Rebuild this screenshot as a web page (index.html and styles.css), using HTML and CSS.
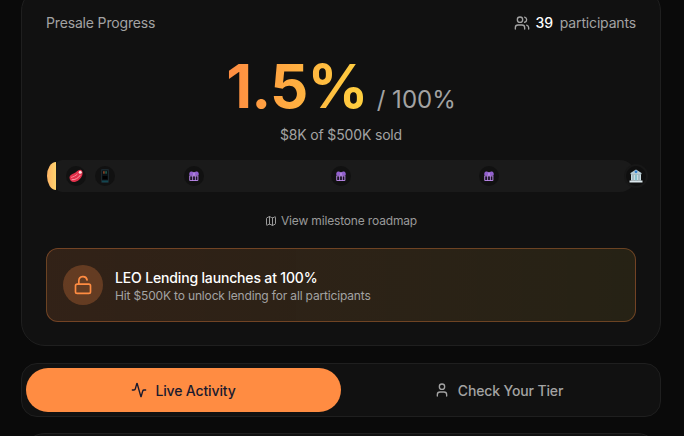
FILE: index.html
```html
<!DOCTYPE html>
<html lang="en">
<head>
<meta charset="utf-8">
<title>Presale Progress</title>
<link rel="stylesheet" href="styles.css">
</head>
<body>
<main class="page">
  <section class="card">
    <header class="head">
      <span>Presale Progress</span>
      <span class="count">
        <svg class="ic16" viewBox="0 0 24 24"><path d="M16 21v-2a4 4 0 0 0-4-4H6a4 4 0 0 0-4 4v2"/><circle cx="9" cy="7" r="4"/><path d="M22 21v-2a4 4 0 0 0-3-3.87"/><path d="M16 3.13a4 4 0 0 1 0 7.75"/></svg>
        <b>39</b> <span>participants</span>
      </span>
    </header>
    <div class="figure"><span class="big">1.5%</span><span class="of">/ 100%</span></div>
    <p class="sold">$8K of $500K sold</p>
    <div class="track">
      <div class="fill"></div>
      <div class="bar"></div>
      <span class="pin" style="left:5%"><svg viewBox="0 0 14 14" class="emo meat"><path d="M.5 8.500C.6 6 3.500 5 5.500 4 7.500 3 9 .8 11.200.7 13.300.6 13.900 3 13.500 5.200 13 8.300 10 11.800 6.500 12.800 3.200 13.700.4 11.700.5 8.500z" fill="#e0304a"/><path d="M3 10.800c3 .2 6.500-1.600 8.300-4.600" stroke="#ff9aa8" stroke-width="1" fill="none"/><path d="M2.500 8.300C4.500 7.700 6.500 6.900 8.200 5.200" stroke="#ff7d8e" stroke-width="1" fill="none"/><circle cx="11.200" cy="3.300" r="1.500" fill="#ffdfe2"/></svg></span>
      <span class="pin" style="left:10%"><svg viewBox="0 0 8 14" class="emo phone"><rect width="8" height="14" rx="1.200" fill="#1b272d"/><rect x="1" y="1.500" width="6" height="10" fill="#0b1115"/><rect x="2" y="2.200" width="1.800" height="2.500" fill="#7a3f24"/><rect x="4.200" y="2.200" width="1.800" height="2.500" fill="#1f5446"/><rect x="1.600" y="7" width="4.800" height="3.200" fill="#000"/><rect x="1" y="11.500" width="6" height="1.700" fill="#134650"/></svg></span>
      <span class="pin" style="left:25%"><svg viewBox="0 0 10 10" class="emo gift"><use href="#gift"/></svg></span>
      <span class="pin" style="left:50%"><svg viewBox="0 0 10 10" class="emo gift"><use href="#gift"/></svg></span>
      <span class="pin" style="left:75%"><svg viewBox="0 0 10 10" class="emo gift"><use href="#gift"/></svg></span>
      <span class="pin pin-end" style="left:100%"><svg viewBox="0 0 14 14" class="emo bank"><path d="M7 .5 12.500 4v1.200h-11V4z" fill="#b6cbd4"/><circle cx="7" cy="2.800" r="1.400" fill="#2f7fd0"/><rect x="2" y="5.200" width="10" height="6.300" fill="#c9dbe2"/><rect x="3.400" y="5.800" width="1.200" height="5.700" fill="#8ea6b1"/><rect x="6.400" y="5.800" width="1.200" height="5.700" fill="#5fb0bd"/><rect x="9.400" y="5.800" width="1.200" height="5.700" fill="#8ea6b1"/><rect x=".5" y="11.500" width="13" height="2" fill="#dbe7ec"/></svg></span>
    </div>
    <a class="roadmap">
      <svg class="ic12" viewBox="0 0 24 24"><path d="M14.106 5.553a2 2 0 0 0 1.788 0l3.659-1.830A1 1 0 0 1 21 4.619v12.764a1 1 0 0 1-.553.894l-4.553 2.277a2 2 0 0 1-1.788 0l-4.212-2.106a2 2 0 0 0-1.788 0l-3.659 1.830A1 1 0 0 1 3 19.381V6.618a1 1 0 0 1 .553-.894l4.553-2.277a2 2 0 0 1 1.788 0z"/><path d="M15 5.764v15"/><path d="M9 3.236v15"/></svg>
      View milestone roadmap
    </a>
    <div class="unlock">
      <span class="unlock-ic"><svg class="ic20" viewBox="0 0 24 24"><rect x="3" y="11" width="18" height="11" rx="2"/><path d="M7 11V7a5 5 0 0 1 9.900-1"/></svg></span>
      <div class="unlock-text">
        <strong>LEO Lending launches at 100%</strong>
        <small>Hit $500K to unlock lending for all participants</small>
      </div>
    </div>
  </section>
  <nav class="tabs">
    <button class="tab on"><svg class="ic16" viewBox="0 0 24 24"><path d="M22 12h-2.480a2 2 0 0 0-1.930 1.460l-2.350 8.360a.25.25 0 0 1-.48 0L9.240 2.180a.25.25 0 0 0-.48 0l-2.350 8.360A2 2 0 0 1 4.490 12H2"/></svg><span class="tab-label">Live Activity</span></button>
    <button class="tab"><svg class="ic16" viewBox="0 0 24 24"><path d="M19 21v-2a4 4 0 0 0-4-4H9a4 4 0 0 0-4 4v2"/><circle cx="12" cy="7" r="4"/></svg><span class="tab-label">Check Your Tier</span></button>
  </nav>
  <section class="next"></section>
</main>
<svg class="defs" aria-hidden="true"><defs><g id="gift"><path d="M.3 2.200C.6.800 2 .2 3 .5L5 1.600 7 .5c1-.3 2.400.3 2.700 1.700v2.300H.3z" fill="#9360cf"/><rect x="1.100" y="4.900" width="7.800" height="4.600" fill="#1c1426" stroke="#c08cf0" stroke-width=".9"/><path d="M5 1.600v2.900" stroke="#c9a2f2" stroke-width="1"/><path d="M3.600 4.900v4.600M6.400 4.900v4.600" stroke="#c08cf0" stroke-width=".8"/></g></defs></svg>
</body>
</html>
```
FILE: styles.css
```css
* { box-sizing: border-box; }
html, body { margin: 0; height: 100%; overflow: hidden; }
body {
  background: #0a0a0a;
  font-family: Inter, "Liberation Sans", sans-serif;
  letter-spacing: -0.01em;
  color: #a3a3a3;
}
svg { fill: none; stroke: currentColor; stroke-width: 2; stroke-linecap: round; stroke-linejoin: round; flex: none; }
.defs { width: 0; height: 0; display: block; }
.ic12 { width: 12px; height: 12px; }
.ic16 { width: 16px; height: 16px; }
.ic20 { width: 20px; height: 20px; }
.page { margin-top: -13px; padding: 0 23px 0 21px; display: flex; flex-direction: column; }
.card {
  background: #111111;
  border: 1px solid #1f1f1f;
  border-radius: 24px;
  padding: 24px;
  height: 359px;
}
.head { display: flex; justify-content: space-between; align-items: center; height: 22px; font-size: 14px; line-height: 20px; }
.count { display: flex; align-items: center; gap: 7px; }
.count svg { margin-right: -1px; }
.count b { color: #fff; font-weight: 500; }
.figure { display: flex; justify-content: center; align-items: baseline; gap: 9px; margin-top: 22px; height: 62px; line-height: 60px; }
.big {
  font-size: 60px; font-weight: 700; line-height: 60px; letter-spacing: -0.014em;
  background: linear-gradient(90deg, #ff8c42, #ffd23f);
  -webkit-background-clip: text; background-clip: text; color: transparent;
}
.of { font-size: 24px; line-height: 32px; color: #a3a3a3; letter-spacing: 0; }
.sold { margin: 7px 0 0; text-align: center; font-size: 14px; line-height: 20px; }
.track { position: relative; height: 32px; margin-top: 15px; }
.bar { height: 32px; margin-left: 10px; background: #1a1a1a; border-radius: 6px 16px 16px 6px; }
.fill {
  position: absolute; left: 1px; top: 2px; bottom: 2px; width: 9px;
  background: linear-gradient(90deg, #ffb566, #ffd36e);
  border-radius: 100% 0 0 100% / 50% 0 0 50%;
}
.pin {
  position: absolute; top: 50%; width: 20px; height: 20px; margin: -10px 0 0 -10px;
  border-radius: 50%; background: #111; display: flex; align-items: center; justify-content: center;
}
.pin-end { box-shadow: 0 0 0 2px #171717; background: #0f0f0f; }
.emo { stroke: none; }
.meat { width: 14px; height: 14px; }
.phone { width: 8px; height: 14px; }
.gift { width: 10px; height: 10px; }
.bank { width: 14px; height: 14px; }
.roadmap { display: flex; align-items: center; justify-content: center; gap: 4px; margin-top: 21px; height: 16px; font-size: 12px; line-height: 16px; color: #9a9a9a; }
.unlock {
  display: flex; align-items: center; gap: 12px; margin-top: 19px; height: 74px; padding: 0 16px;
  border: 1px solid rgba(255, 140, 66, .32); border-radius: 12px;
  background: linear-gradient(90deg, rgba(255, 140, 66, .14), rgba(255, 210, 63, .09));
}
.unlock-ic { width: 40px; height: 40px; border-radius: 50%; background: rgba(255, 140, 66, .25); color: #ff8c42; display: flex; align-items: center; justify-content: center; flex: none; }
.unlock-text { display: flex; flex-direction: column; padding-top: 2px; }
.unlock-text strong { color: #fff; font-size: 14px; font-weight: 500; line-height: 20px; }
.unlock-text small { font-size: 12px; line-height: 16px; color: #a3a3a3; }
.tabs { display: flex; margin-top: 17px; height: 54px; padding: 4px; background: #111; border: 1px solid #1f1f1f; border-radius: 16px; }
.tab { flex: 1; border: 0; background: none; font: 500 14px/20px Inter, "Liberation Sans", sans-serif; letter-spacing: -0.01em; color: #a3a3a3; border-radius: 22px; display: flex; align-items: center; justify-content: center; gap: 8px; padding: 0; }
.tab-label { padding-top: 2px; }
.tab.on { background: #ff8c42; color: #1a1a2e; }
.next { margin-top: 16px; height: 80px; background: #111; border: 1px solid #1f1f1f; border-radius: 24px; }
```
